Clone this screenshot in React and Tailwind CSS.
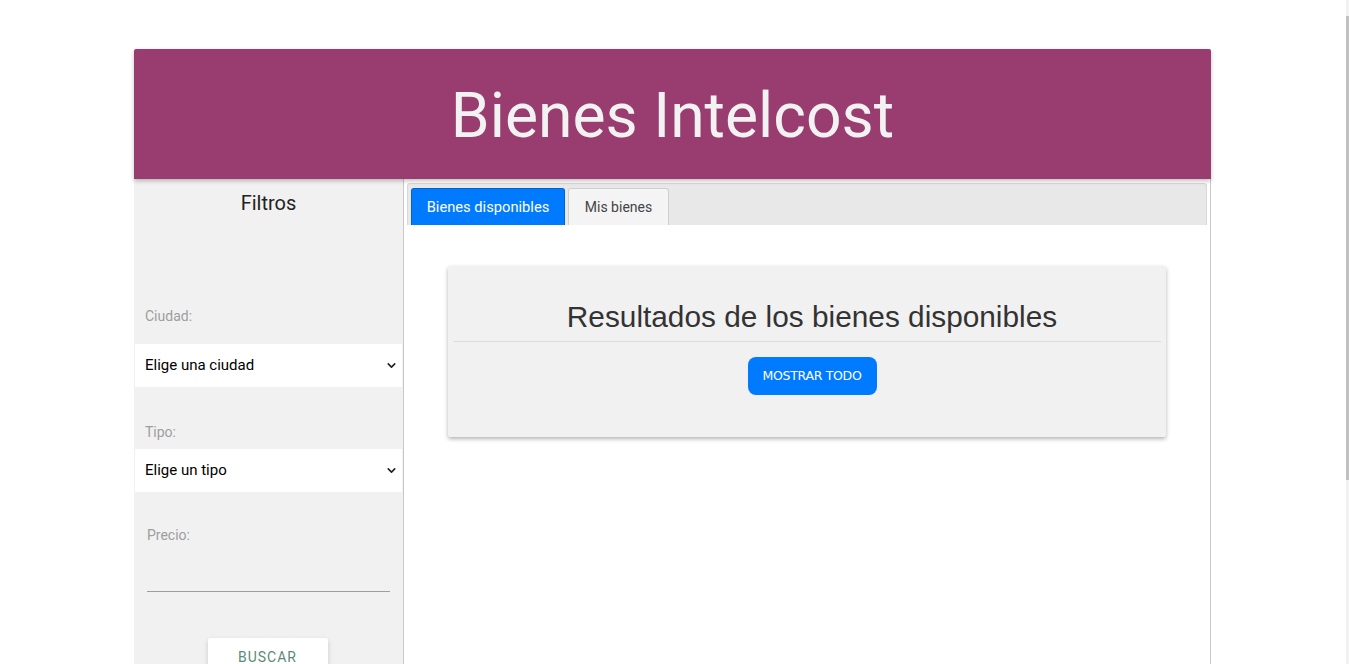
import { ChevronDown } from "lucide-react";

function Select({ placeholder }) {
  return (
    <div className="flex items-center justify-between h-[43px] bg-white pl-[10px] pr-[4px] ml-px mr-px">
      <span className="text-[15px] text-black">{placeholder}</span>
      <ChevronDown size={13} strokeWidth={3} className="text-[#222]" />
    </div>
  );
}

export default function App() {
  return (
    <div className="h-[664px] bg-white font-['Roboto',sans-serif] overflow-hidden flex">
      <div className="flex-1">
        <div className="w-[1077px] ml-[134px] pt-[49px]">
          <header className="h-[130px] bg-[#993c6f] rounded-t-[2px] shadow-[0_2px_4px_rgba(0,0,0,0.25)] flex items-center justify-center relative z-10">
            <h1 className="text-[62.4px] font-normal text-[#f2f2f2] pt-[4px]">
              Bienes Intelcost
            </h1>
          </header>

          <div className="flex h-[485px]">
            <aside className="w-[270px] bg-[#f1f1f1] border-r border-[#c8c8c8] flex flex-col">
              <h2 className="text-[20px] text-[#222] text-center mt-[9px] h-[26px]">Filtros</h2>

              <label className="text-[14px] text-[#9e9e9e] ml-[11px] mt-[92px]">Ciudad:</label>
              <div className="mt-[17px]">
                <Select placeholder="Elige una ciudad" />
              </div>

              <label className="text-[14px] text-[#9e9e9e] ml-[11px] mt-[35px]">Tipo:</label>
              <div className="mt-[6px]">
                <Select placeholder="Elige un tipo" />
              </div>

              <label className="text-[14px] text-[#9e9e9e] ml-[13px] mt-[33px]">Precio:</label>
              <div className="mx-[13px] mt-[45px] border-b border-[#9e9e9e]" />

              <div className="flex justify-center mt-[46px] pr-[2px]">
                <button className="w-[120px] h-[36px] bg-white rounded-[2px] shadow-[0_2px_5px_rgba(0,0,0,0.16)] text-[14px] tracking-[1px] text-[#5b8a79] pt-[2px]">
                  BUSCAR
                </button>
              </div>
            </aside>

            <main className="flex-1 bg-white border-r border-[#c8c8c8] flex flex-col">
              <div className="mt-[4px] mx-[3px] h-[42px] bg-[#e8e8e8] border border-[#d8d8d8] border-b-0 rounded-t-[3px] flex items-end gap-[3px] pl-[3px]">
                <button className="h-[37px] w-[154px] bg-[#007bff] text-white text-[14.7px] rounded-t-[3px] border border-[#0062d0] border-b-0">
                  Bienes disponibles
                </button>
                <button className="h-[37px] w-[101px] bg-[#f4f4f4] text-[#444] text-[14px] rounded-t-[3px] border border-[#cfcfcf] border-b-0">
                  Mis bienes
                </button>
              </div>

              <div className="mt-[41px] ml-[44px] w-[718px] h-[171px] bg-[#f1f1f1] rounded-[2px] shadow-[0_2px_4px_rgba(0,0,0,0.3)] flex flex-col items-center">
                <h3 className="mt-[33px] pl-[10px] text-[29.8px] leading-[36px] text-[#333] font-['Liberation_Sans',Arial,sans-serif]">
                  Resultados de los bienes disponibles
                </h3>
                <div className="w-[708px] mt-[6px] border-t border-[#dddddd]" />
                <button className="mt-[15px] ml-[10px] w-[129px] h-[38px] rounded-[8px] bg-[#007bff] text-white text-[12.5px] tracking-[-0.3px] font-['DejaVu_Sans',sans-serif]">
                  MOSTRAR TODO
                </button>
              </div>
            </main>
          </div>
        </div>
      </div>
      <div className="w-[3px] bg-[#f1f1f1] flex flex-col">
        <div className="h-[16px]" />
        <div className="h-[464px] bg-[#c1c1c1]" />
      </div>
    </div>
  );
}
